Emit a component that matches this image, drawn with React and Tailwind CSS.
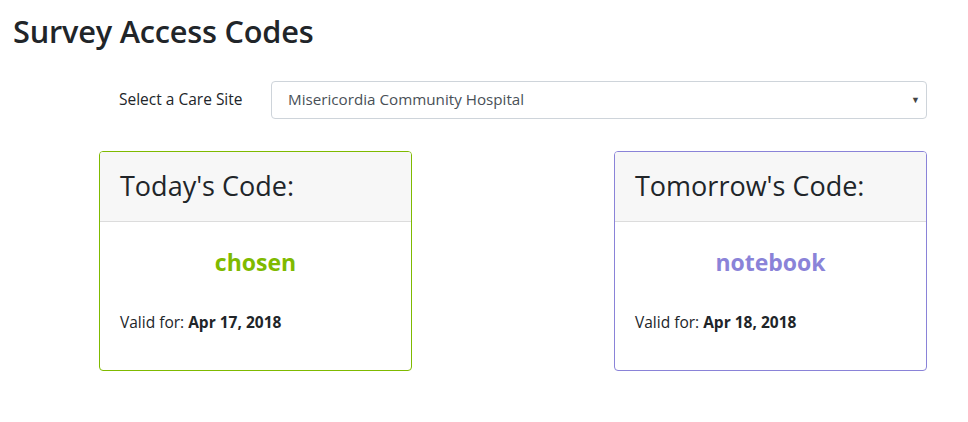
import React from 'react';

const CodeCard = ({ title, code, date, borderClass, codeClass }) => (
  <div className={`w-[313px] h-[220px] rounded border bg-white flex flex-col overflow-hidden ${borderClass}`}>
    <div className="h-[70px] bg-[#f7f7f7] border-b border-[#dcdcdc] px-5 flex items-center">
      <h3 className="text-[27px] font-normal text-[#212529] leading-none pb-[2px]">{title}</h3>
    </div>
    <div className="px-5 flex-1">
      <div className={`text-center text-[23px] font-bold mt-[29px] leading-none ${codeClass}`}>{code}</div>
      <p className="mt-[37px] text-[15.5px] text-[#212529]">
        Valid for: <span className="font-bold">{date}</span>
      </p>
    </div>
  </div>
);

export default function App() {
  return (
    <div className="w-[968px] h-[422px] bg-white font-['Open_Sans',sans-serif] text-[#212529]">
      <h1 className="pl-[13px] pt-[16px] text-[30.7px] font-semibold leading-none tracking-[-0.2px] text-[#212529]">
        Survey Access Codes
      </h1>

      <div className="ml-[99px] w-[828px] mt-[34px]">
        <div className="flex items-center">
          <label className="w-[172px] pl-5 text-[15.5px] text-[#212529]">Select a Care Site</label>
          <div className="relative flex-1">
            <div className="h-[38px] rounded border border-[#ced4da] bg-white flex items-center pl-4 text-[15.2px] text-[#495057]">
              Misericordia Community Hospital
            </div>
            <span className="absolute right-[7px] top-[12px] text-[9px] text-[#444]">▼</span>
          </div>
        </div>

        <div className="flex justify-between mt-[32px]">
          <CodeCard
            title="Today's Code:"
            code="chosen"
            date="Apr 17, 2018"
            borderClass="border-[#7fba00]"
            codeClass="text-[#7fba00]"
          />
          <CodeCard
            title="Tomorrow's Code:"
            code="notebook"
            date="Apr 18, 2018"
            borderClass="border-[#8a83d8]"
            codeClass="text-[#8a83d8]"
          />
        </div>
      </div>
    </div>
  );
}
